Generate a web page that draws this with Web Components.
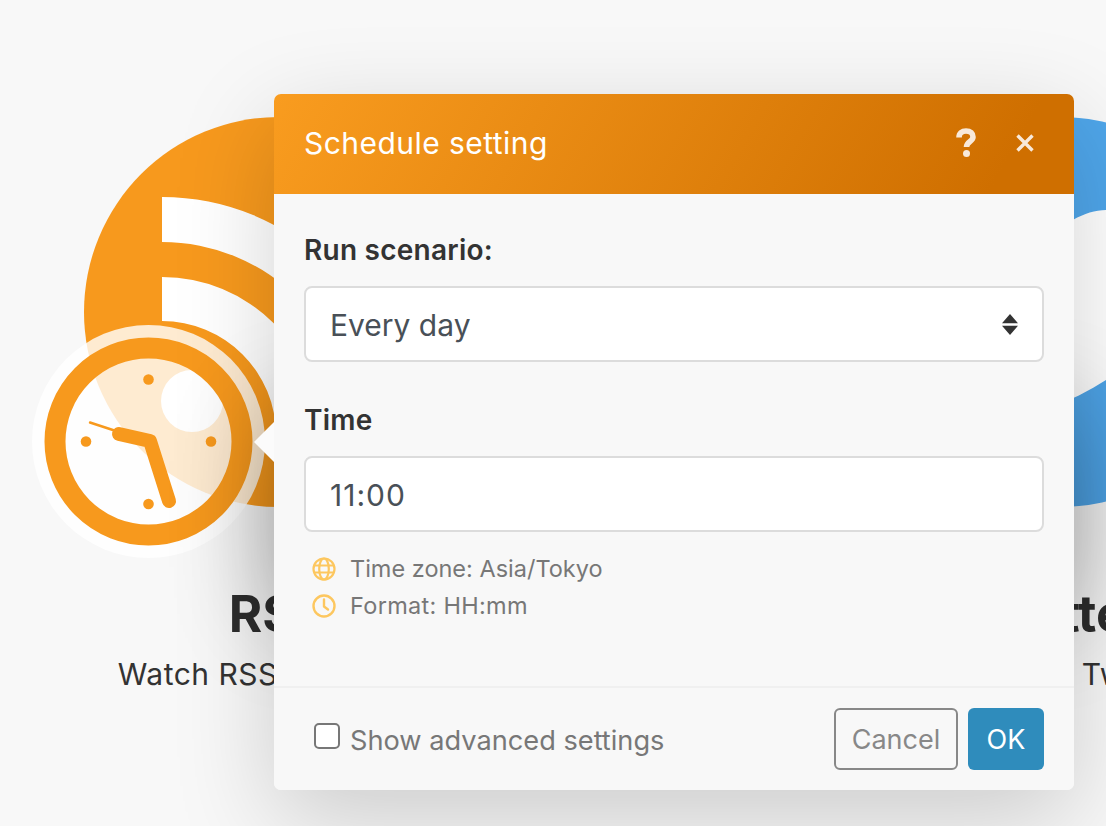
<!DOCTYPE html>
<html>
<head>
<meta charset="utf-8">
<title>Schedule setting</title>
<style>
  html, body { margin: 0; height: 100%; }
  body {
    position: relative;
    height: 826px;
    overflow: hidden;
    background: #f8f8f8;
    font-family: Inter, "Liberation Sans", sans-serif;
    color: #333;
  }
  .rss { left: 84px; top: 117px; }
  .twitter { left: 865px; top: 117px; }
  schedule-clock { left: 32px; top: 325px; }
  schedule-dialog { left: 274px; top: 94px; }
</style>
</head>
<body>
<template id="module-tpl">
  <style>
    :host { position: absolute; display: block; width: 390px; }
    .disc { width: 390px; height: 390px; border-radius: 50%; background: var(--disc, #f7991d); }
    .disc ::slotted(svg) { display: block; width: 390px; height: 390px; }
    .name, .what { white-space: nowrap; display: flex; justify-content: center; }
    .name { margin-top: 77px; font-size: 51px; font-weight: 700; line-height: 60px; color: #2e2e2e; }
    .what { margin-top: 8px; font-size: 30px; letter-spacing: .5px; line-height: 44px; color: #333; }
  </style>
  <div class="disc"><slot name="icon"></slot></div>
  <div class="name"><slot name="name"></slot></div>
  <div class="what"><slot name="what"></slot></div>
</template>

<template id="clock-tpl">
  <style>
    :host { position: absolute; display: block; width: 233px; height: 233px; }
    svg { display: block; }
  </style>
  <svg width="233" height="233" viewBox="0 0 233 233">
    <circle cx="116.5" cy="116.5" r="116.5" fill="#fff" fill-opacity=".8"/>
    <circle cx="116.5" cy="116.5" r="93.5" fill="none" stroke="#f7991d" stroke-width="21"/>
    <circle cx="116.5" cy="54.5" r="5.3" fill="#f7991d"/>
    <circle cx="179" cy="116.5" r="5.3" fill="#f7991d"/>
    <circle cx="116.5" cy="179" r="5.3" fill="#f7991d"/>
    <circle cx="54" cy="116.5" r="5.3" fill="#f7991d"/>
    <path d="M58 97.5 L90 108" fill="none" stroke="#f7991d" stroke-width="2.4" stroke-linecap="round"/>
    <path d="M87 109 L118 116 L137 176" fill="none" stroke="#f7991d" stroke-width="14" stroke-linecap="round" stroke-linejoin="round"/>
  </svg>
</template>

<template id="note-tpl">
  <style>
    :host { display: flex; align-items: center; height: 37px; font-size: 23.5px; color: #777; }
    ::slotted(svg) { width: 24px; height: 24px; margin-left: 8px; margin-right: 14px; flex: none; }
  </style>
  <slot name="icon"></slot><slot></slot>
</template>

<template id="field-tpl">
  <style>
    :host { display: block; }
    label { display: block; font-size: 28px; letter-spacing: .25px; font-weight: 600; line-height: 36px; color: #333; margin-bottom: 18px; }
    .box {
      box-sizing: border-box; height: 76px; padding: 2px 24px 0;
      display: flex; align-items: center; justify-content: space-between;
      background: #fff; border: 2px solid #dcdcdc; border-radius: 8px;
      font-size: 30px; color: #495057;
    }
  </style>
  <label><slot name="label"></slot></label>
  <div class="box"><slot></slot><slot name="end"></slot></div>
</template>

<template id="dialog-tpl">
  <style>
    :host {
      position: absolute; display: block; width: 800px; height: 696px; border-radius: 7px;
      box-shadow: 0 30px 100px rgba(0,0,0,.18);
    }
    /* darker patch behind the lower half, the shadow peaks around y=500 */
    .glow {
      position: absolute; left: 0; right: 0; top: 320px; height: 200px;
      box-shadow: 0 0 100px rgba(0,0,0,.3);
    }
    .arrow {
      position: absolute; left: -20px; top: 328px; width: 0; height: 0;
      border-style: solid; border-width: 20px 20px 20px 0;
      border-color: transparent #fbfbfb transparent transparent;
    }
    .panel {
      position: relative; height: 100%; display: flex; flex-direction: column;
      background: #f8f8f8; border-radius: 7px;
    }
    header {
      height: 100px; flex: none; box-sizing: border-box; padding: 0 30px 3px;
      display: flex; align-items: center; justify-content: space-between;
      border-radius: 7px 7px 0 0;
      background: linear-gradient(120deg, #f99c1f 0%, #cf6f00 90%);
      color: #fff; font-size: 30px; letter-spacing: .45px;
    }
    .tools { display: flex; align-items: center; gap: 40px; padding-right: 10px; color: #f8e9da; }
    .main { flex: 1; padding: 38px 30px 0; display: flex; flex-direction: column; }
    .main ::slotted(schedule-field) { margin-bottom: 40px; }
    .notes { margin-top: -22px; }
    footer {
      height: 104px; flex: none; box-sizing: border-box;
      border-top: 2px solid #f0f0f0; padding: 20px 30px 0 40px;
      display: flex; justify-content: space-between; align-items: flex-start;
    }
    .check { display: flex; align-items: center; gap: 10px; height: 62px; font-size: 27.2px; color: #777; }
    .check i { display: block; box-sizing: border-box; width: 26px; height: 26px; margin-top: -6px; background: #fff; border: 2px solid #777; border-radius: 5px; }
    .check span { padding-top: 2px; }
    .btns { display: flex; gap: 10px; }
    button {
      box-sizing: border-box; height: 62px; padding: 0; border-radius: 6px;
      font: inherit; font-size: 27px; cursor: pointer;
    }
    .cancel { width: 124px; background: transparent; border: 2px solid #888; color: #888; }
    .ok { width: 76px; background: #2f8cbc; border: 0; color: #fff; }
  </style>
  <div class="glow"></div>
  <div class="arrow"></div>
  <div class="panel">
    <header>
      <span><slot name="title"></slot></span>
      <div class="tools"><slot name="tools"></slot></div>
    </header>
    <div class="main">
      <slot name="fields"></slot>
      <div class="notes"><slot name="notes"></slot></div>
    </div>
    <footer>
      <div class="check"><i></i><span><slot name="check"></slot></span></div>
      <div class="btns">
        <button class="cancel">Cancel</button>
        <button class="ok">OK</button>
      </div>
    </footer>
  </div>
</template>

<scenario-module class="rss">
  <svg slot="icon" viewBox="84 117 390 390">
    <path d="M162 197 A238 238 0 0 1 400 435 L355 435 A193 193 0 0 0 162 242 Z" fill="#fff"/>
    <path d="M162 277 A158 158 0 0 1 320 435 L276 435 A114 114 0 0 0 162 321 Z" fill="#fff"/>
    <circle cx="192" cy="401" r="31" fill="#fff"/>
  </svg>
  <span slot="name">RSS</span>
  <span slot="what">Watch RSS feed items</span>
</scenario-module>

<scenario-module class="twitter" style="--disc:#4fa6ea">
  <svg slot="icon" viewBox="0 0 390 390">
    <path d="M180 125 C195 108 220 93 241 93 L300 93 L300 240 L241 263 C225 273 205 285 180 290 Z" fill="#fff"/>
  </svg>
  <span slot="name">Twitter</span>
  <span slot="what" style="margin-left:-22px">Watch new Tweets</span>
</scenario-module>

<schedule-clock></schedule-clock>

<schedule-dialog>
  <span slot="title">Schedule setting</span>
  <svg slot="tools" width="20" height="29" viewBox="0 0 20 29">
    <path d="M3 9.500 C3 5 6 3 10 3 C14.500 3 17 5.500 17 9 C17 13.500 10.500 13.500 10.500 19" fill="none" stroke="currentColor" stroke-width="5.600"/>
    <circle cx="10.500" cy="25.500" r="3.500" fill="currentColor"/>
  </svg>
  <svg slot="tools" width="18" height="18" viewBox="0 0 18 18">
    <path d="M1.500 1.500 L16.500 16.500 M16.500 1.500 L1.500 16.500" fill="none" stroke="currentColor" stroke-width="3.400"/>
  </svg>

  <schedule-field slot="fields">
    <span slot="label">Run scenario:</span>
    <span>Every day</span>
    <svg slot="end" width="16" height="21" viewBox="0 0 16 21" style="margin-top:-2px">
      <path d="M8 0 L16 9.200 L0 9.200 Z M8 21 L0 11.800 L16 11.800 Z" fill="#333"/>
    </svg>
  </schedule-field>
  <schedule-field slot="fields">
    <span slot="label">Time</span>
    <span style="letter-spacing:1px">11:00</span>
  </schedule-field>

  <schedule-note slot="notes">
    <svg slot="icon" viewBox="0 0 24 24" fill="none" stroke="#fdc75f" stroke-width="2.200">
      <circle cx="12" cy="12" r="10.500"/>
      <ellipse cx="12" cy="12" rx="4.800" ry="10.500"/>
      <path d="M2.200 8.500 H21.800 M2.200 15.500 H21.800"/>
    </svg>
    Time zone: Asia/Tokyo
  </schedule-note>
  <schedule-note slot="notes">
    <svg slot="icon" viewBox="0 0 24 24" fill="none" stroke="#fdc75f" stroke-width="2.400">
      <circle cx="12" cy="12" r="10.500"/>
      <path d="M12 5.500 V12.500 L16 15.500" stroke-linecap="round" stroke-linejoin="round"/>
    </svg>
    <span style="letter-spacing:.3px">Format: HH:mm</span>
  </schedule-note>

  <span slot="check">Show advanced settings</span>
</schedule-dialog>

<script>
  function define(name, tplId) {
    customElements.define(name, class extends HTMLElement {
      constructor() {
        super();
        const tpl = document.getElementById(tplId);
        this.attachShadow({ mode: 'open' }).appendChild(tpl.content.cloneNode(true));
      }
    });
  }
  define('scenario-module', 'module-tpl');
  define('schedule-clock', 'clock-tpl');
  define('schedule-note', 'note-tpl');
  define('schedule-field', 'field-tpl');
  define('schedule-dialog', 'dialog-tpl');
</script>
</body>
</html>
